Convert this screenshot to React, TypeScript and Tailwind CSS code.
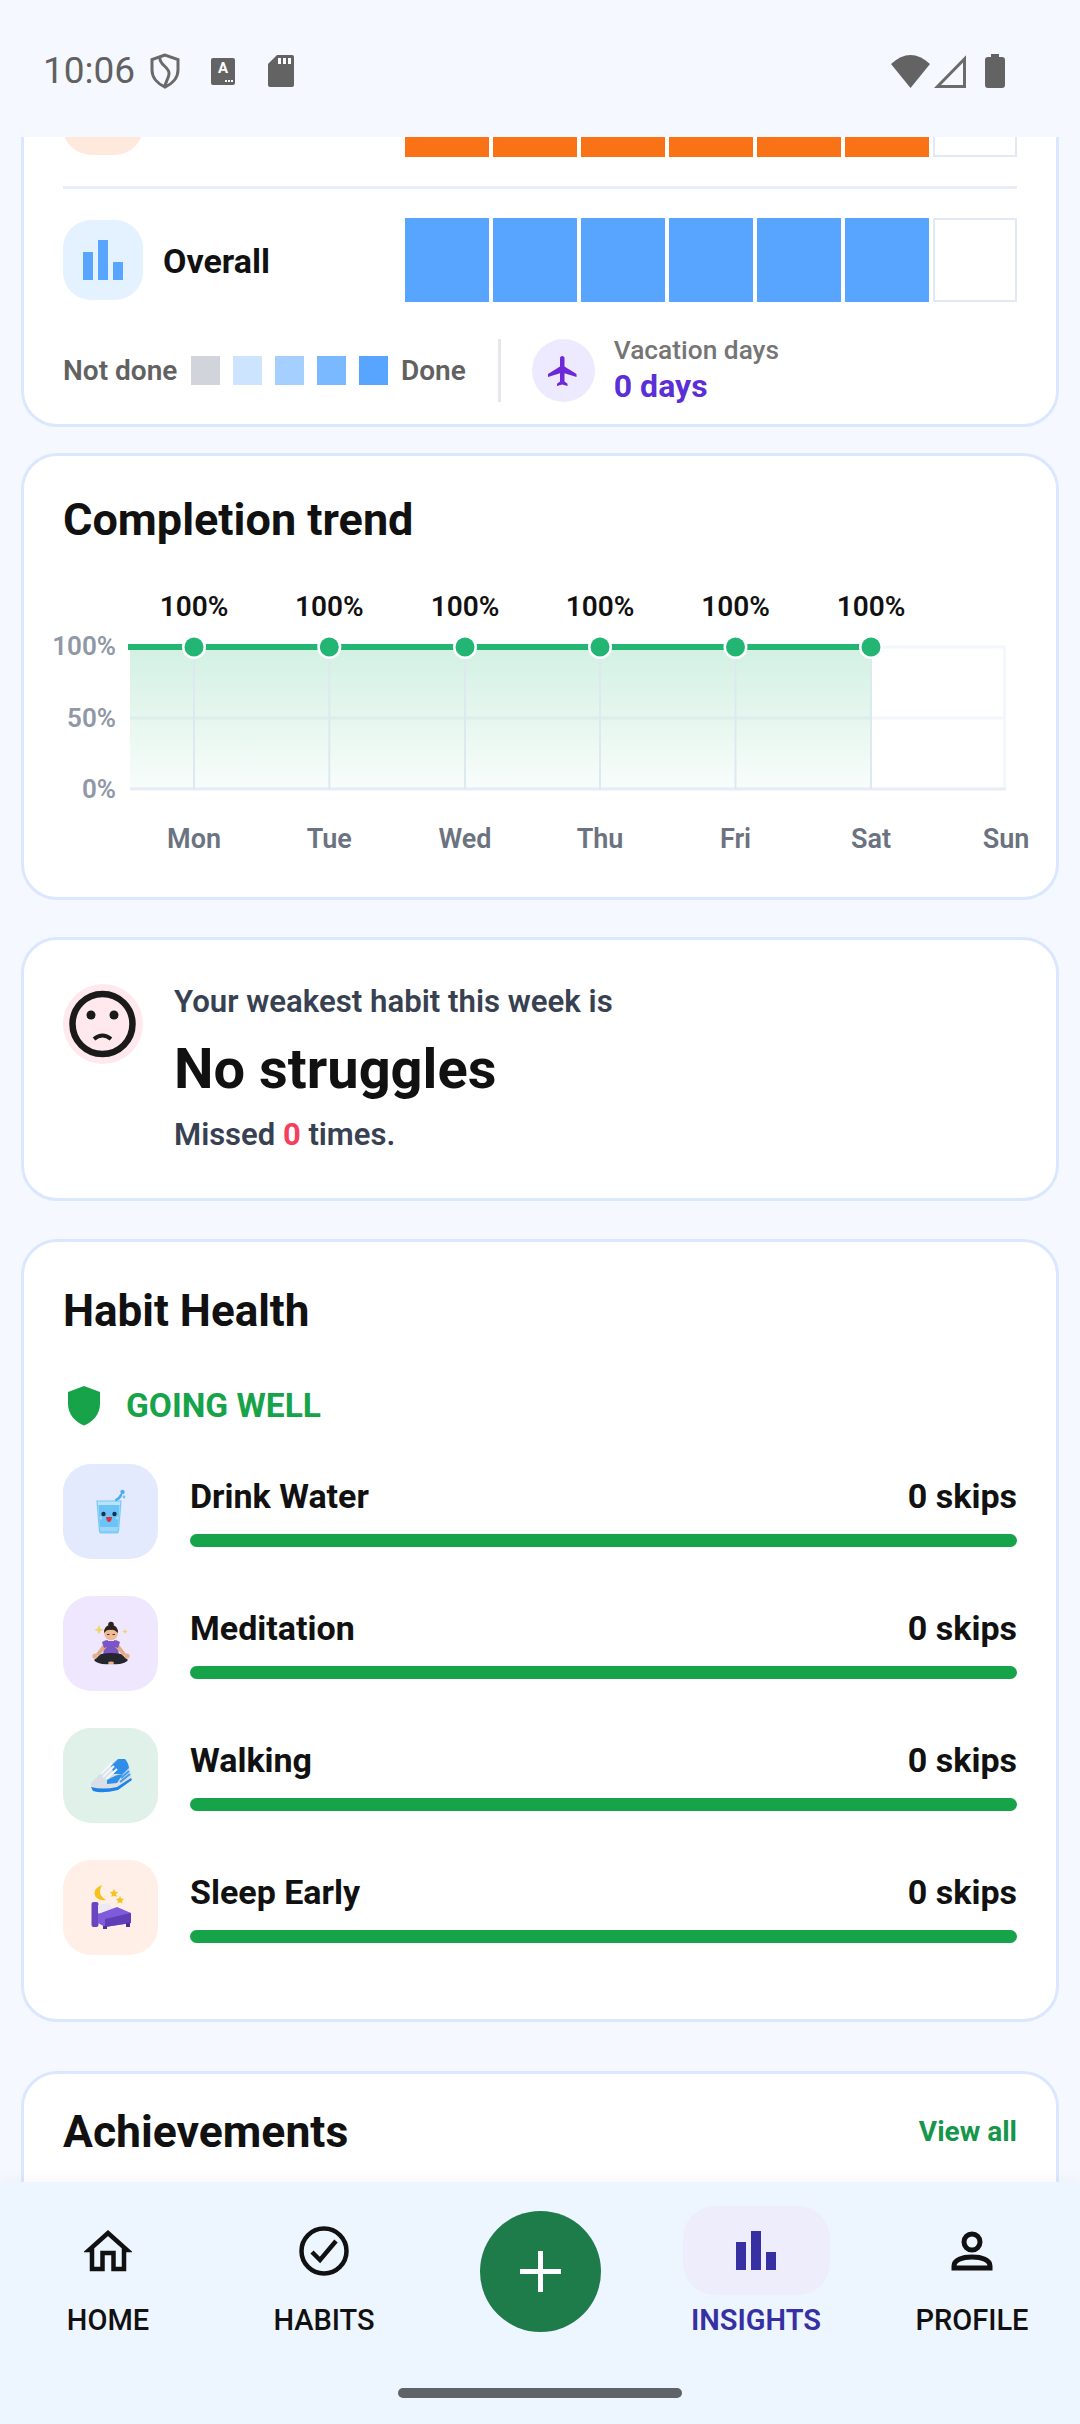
import React from "react";

const font = { fontFamily: "Roboto, sans-serif" };

function StatusBar() {
  return (
    <div className="h-[137px] shrink-0 flex items-start justify-between pl-[43px] pr-[75px] pt-[54px] text-[#5f6368]">
      <div className="flex items-center h-[34px]">
        <span className="text-[37px] leading-[34px] text-[#616161] w-[106px]">10:06</span>
        <svg width="32" height="36" viewBox="0 0 32 36" fill="none" stroke="#6a6a6a" strokeWidth="3">
          <path d="M16 2 L3 6.5 V17 C3 25 9 31 16 34 C23 31 29 25 29 17 V6.5 Z" />
          <path d="M11 5 C10 12 21 14 20 21 C19.7 25 17 28 16 33" />
        </svg>
        <div className="ml-[30px] w-[24px] h-[27px] bg-[#636363] rounded-[2px] relative flex justify-center">
          <span className="text-white text-[15px] leading-[21px] font-bold">A</span>
          <div className="absolute right-[2px] bottom-[3px] flex gap-[1px]">
            <i className="w-[2px] h-[2px] bg-white block" />
            <i className="w-[2px] h-[2px] bg-white block" />
            <i className="w-[2px] h-[2px] bg-white block" />
          </div>
        </div>
        <svg width="26" height="32" viewBox="0 0 26 32" className="ml-[33px]">
          <path d="M9 0 H24 Q26 0 26 2 V30 Q26 32 24 32 H2 Q0 32 0 30 V9 Z" fill="#636363" />
          <rect x="10" y="3" width="3" height="6" fill="#fff" />
          <rect x="15" y="3" width="3" height="6" fill="#fff" />
          <rect x="20" y="3" width="3" height="6" fill="#fff" />
        </svg>
      </div>
      <div className="flex items-center h-[34px] gap-[4px]">
        <svg width="39" height="33" viewBox="0 0 39 33">
          <path d="M0 9 Q19.5 -9 39 9 L19.5 33 Z" fill="#636363" />
        </svg>
        <svg width="32" height="33" viewBox="0 0 32 33">
          <path d="M30.5 4 V31.5 H3.5 Z" fill="none" stroke="#6b6b6b" strokeWidth="3" />
        </svg>
        <svg width="20" height="34" viewBox="0 0 20 34" className="ml-[15px]">
          <path d="M6 0 H14 V3 H17 Q20 3 20 6 V31 Q20 34 17 34 H3 Q0 34 0 31 V6 Q0 3 3 3 H6 Z" fill="#636363" />
        </svg>
      </div>
    </div>
  );
}

function Cells({ color, done }: { color: string; done: number }) {
  return (
    <div className="w-[612px] h-[84px] grid grid-cols-7 gap-[4.5px]">
      {[0, 1, 2, 3, 4, 5, 6].map((i) =>
        i < done ? (
          <div key={i} className="h-full" style={{ background: color }} />
        ) : (
          <div key={i} className="h-full border-2 border-[#e2e8f4] bg-white" />
        ),
      )}
    </div>
  );
}

function WeekCard() {
  return (
    <div className="mx-[21px] -mt-[107px] bg-white border-[3px] border-[#dbe7fe] rounded-[36px] px-[39px] pt-[40px] pb-[22px]">
      <div className="flex items-center justify-between h-[84px]">
        <div className="w-[80px] h-[80px] rounded-[28px] bg-[#ffe9dd]" />
        <Cells color="#f97316" done={6} />
      </div>
      <div className="h-[3px] bg-[#e8edf7] mt-[29px]" />
      <div className="flex items-center justify-between h-[84px] mt-[29px]">
        <div className="flex items-center gap-[20px]">
          <div className="w-[80px] h-[80px] rounded-[28px] bg-[#e4f1ff] flex items-center justify-center">
            <svg width="40" height="40" viewBox="0 0 40 40" fill="#57a5ff">
              <rect x="0" y="12" width="10" height="28" />
              <rect x="15" y="0" width="10" height="40" />
              <rect x="30" y="22" width="10" height="18" />
            </svg>
          </div>
          <span className="text-[34px] leading-[40px] font-bold text-[#111] pt-[2px]">Overall</span>
        </div>
        <Cells color="#57a5ff" done={6} />
      </div>
      <div className="flex items-center h-[63px] mt-[37px]">
        <span className="text-[28px] font-semibold text-[#616161] leading-[36px] w-[128px]">Not done</span>
        <div className="flex gap-[13px]">
          <div className="w-[29px] h-[29px] bg-[#d1d5db]" />
          <div className="w-[29px] h-[29px] bg-[#cde4ff]" />
          <div className="w-[29px] h-[29px] bg-[#a4cfff]" />
          <div className="w-[29px] h-[29px] bg-[#7ab8ff]" />
          <div className="w-[29px] h-[29px] bg-[#57a5ff]" />
        </div>
        <span className="ml-[13px] text-[28px] font-semibold text-[#616161] leading-[36px]">Done</span>
        <div className="ml-[32px] w-[3px] h-[63px] bg-[#e5e7eb]" />
        <div className="ml-[31px] w-[63px] h-[63px] rounded-full bg-[#ede9fe] flex items-center justify-center">
          <svg width="36" height="36" viewBox="0 0 24 24" fill="#6d28d9">
            <path d="M21 16v-2l-8-5V3.5c0-.83-.67-1.5-1.5-1.5S10 2.67 10 3.5V9l-8 5v2l8-2.5V19l-2 1.5V22l3.5-1 3.5 1v-1.5L13 19v-5.5l8 2.5z" />
          </svg>
        </div>
        <div className="ml-[19px] flex flex-col">
          <span className="text-[26.3px] leading-[30px] font-medium text-[#757575] -mt-[2px]">Vacation days</span>
          <span className="text-[32px] leading-[36px] font-bold text-[#5b2fd6] mt-[3px]">0 days</span>
        </div>
      </div>
    </div>
  );
}

const xs = [194, 329.3, 465, 600, 735.5, 871];
const grid = "#f3f6fb";

function TrendCard() {
  const days: [string, number][] = [
    ["Mon", 194],
    ["Tue", 329.3],
    ["Wed", 465],
    ["Thu", 600],
    ["Fri", 735.5],
    ["Sat", 871],
    ["Sun", 1006],
  ];
  return (
    <div className="mx-[21px] mt-[26px] bg-white border-[3px] border-[#dbe7fe] rounded-[36px] pt-[38px]">
      <h2 className="ml-[39px] text-[45px] leading-[52px] font-bold text-[#111]">Completion trend</h2>
      <svg width="1032" height="351" viewBox="24 546 1032 351" className="block" style={font}>
        <defs>
          <linearGradient id="fillG" x1="0" y1="0" x2="0" y2="1">
            <stop offset="0" stopColor="#22b573" stopOpacity="0.2" />
            <stop offset="1" stopColor="#22b573" stopOpacity="0.03" />
          </linearGradient>
        </defs>
        <path d="M1004.5 647 V789" stroke={grid} strokeWidth="3" fill="none" />
        <path d="M130 647 H1006 M130 718 H1006" stroke={grid} strokeWidth="3" fill="none" />
        <path d="M130 789 H1006" stroke="#e8edf7" strokeWidth="3" fill="none" />
        <rect x="130" y="647" width="741" height="142" fill="url(#fillG)" />
        {xs.map((x) => (
          <path key={x} d={`M${x} 647 V789`} stroke="#dceaf0" strokeWidth="2" fill="none" />
        ))}
        <path d="M128 647 H871" stroke="#22b573" strokeWidth="6" fill="none" />
        {xs.map((x) => (
          <g key={x}>
            <circle cx={x} cy="647" r="12" fill="#fff" />
            <circle cx={x} cy="647" r="9.5" fill="#22b573" />
            <text x={x} y="616" textAnchor="middle" fontSize="28" fontWeight="600" fill="#111">100%</text>
          </g>
        ))}
        <text x="116" y="655" textAnchor="end" fontSize="26" fontWeight="600" fill="#9097a6">100%</text>
        <text x="116" y="727" textAnchor="end" fontSize="26" fontWeight="600" fill="#9097a6">50%</text>
        <text x="116" y="798" textAnchor="end" fontSize="26" fontWeight="600" fill="#9097a6">0%</text>
        {days.map(([d, x]) => (
          <text key={d} x={x} y="848" textAnchor="middle" fontSize="27" fontWeight="600" fill="#6b7280">{d}</text>
        ))}
      </svg>
    </div>
  );
}

function WeakestCard() {
  return (
    <div className="mx-[21px] mt-[37px] h-[264px] bg-white border-[3px] border-[#dbe7fe] rounded-[36px] pl-[39px] pt-[44px] flex gap-[31px]">
      <div className="w-[80px] h-[80px] rounded-full bg-[#ffe9ee] shrink-0">
        <svg width="80" height="80" viewBox="0 0 80 80" fill="none">
          <circle cx="39.5" cy="40" r="30" stroke="#1a1a1a" strokeWidth="6.5" />
          <circle cx="28" cy="31" r="4.5" fill="#1a1a1a" />
          <circle cx="51" cy="31" r="4.5" fill="#1a1a1a" />
          <path d="M31 55 Q39.5 48 48 55" stroke="#1a1a1a" strokeWidth="4" />
        </svg>
      </div>
      <div className="flex flex-col">
        <span className="text-[31.2px] leading-[36px] font-semibold text-[#374151]">Your weakest habit this week is</span>
        <span className="text-[56px] leading-[64px] font-bold text-[#111] mt-[17px]">No struggles</span>
        <span className="text-[31px] leading-[36px] font-semibold text-[#374151] mt-[16px]">
          Missed <b className="font-bold text-[#f43f5e]">0</b> times.
        </span>
      </div>
    </div>
  );
}

function WaterIcon() {
  return (
    <svg width="48" height="48" viewBox="0 0 48 48">
      <path d="M10 13 H34 L31.5 43 Q31.4 45 29 45 H15 Q12.6 45 12.5 43 Z" fill="#b9e3fb" stroke="#79c8f5" strokeWidth="1.2" />
      <path d="M11.5 17 H32.5 L31 43 Q31 44.5 29 44.5 H15 Q13 44.5 13 43 Z" fill="#6cc3f6" />
      <path d="M13 39 H31 L30.8 43.5 H13.3 Z" fill="#9ad6f9" />
      <path d="M29 12 Q33 10 34 7" stroke="#4aaef0" strokeWidth="2.4" fill="none" strokeLinecap="round" />
      <circle cx="35.5" cy="4" r="2.2" fill="#4aaef0" />
      <circle cx="37" cy="9" r="1.4" fill="#6cc3f6" />
      <circle cx="16.5" cy="26" r="2.2" fill="#16324f" />
      <circle cx="27.5" cy="26" r="2.2" fill="#16324f" />
      <path d="M19 29 H25 Q24.5 34 22 34 Q19.5 34 19 29 Z" fill="#d9304a" />
      <circle cx="13.8" cy="30" r="1.5" fill="#9ad6f9" />
      <circle cx="30.2" cy="30" r="1.5" fill="#9ad6f9" />
    </svg>
  );
}

function MeditateIcon() {
  return (
    <svg width="48" height="48" viewBox="0 0 48 48">
      <path d="M12 5 l1.4 3.4 3.4 1.4 -3.4 1.4 -1.4 3.4 -1.4 -3.4 -3.4 -1.4 3.4 -1.4 Z" fill="#f2d36b" />
      <path d="M38 9 l.8 1.8 1.8 .8 -1.8 .8 -.8 1.8 -.8 -1.8 -1.8 -.8 1.8 -.8 Z" fill="#f2d36b" />
      <path d="M18 21 H30 L32 35 H16 Z" fill="#7a55c7" />
      <path d="M18 22 L9 34 L11.5 36 L20 27 Z M30 22 L39 34 L36.5 36 L28 27 Z" fill="#e2a983" />
      <path d="M15 22 Q18 20 21 20 L20 27 L17 28 Z M33 22 Q30 20 27 20 L28 27 L31 28 Z" fill="#7a55c7" />
      <circle cx="24" cy="13.5" r="6.8" fill="#eeb995" />
      <path d="M17 13 Q17 5 24 5 Q31 5 31 13 Q27 9 24 10 Q20 9 17 13 Z" fill="#2b2320" />
      <circle cx="24" cy="4.5" r="2.8" fill="#2b2320" />
      <path d="M20 14.5 h2.5 M25.5 14.5 h2.5" stroke="#2b2320" strokeWidth="0.9" />
      <path d="M14 34 Q24 32 34 34 L41 40 Q38 45 24 44 Q10 45 7 40 Z" fill="#26262e" />
      <circle cx="8" cy="36" r="2.6" fill="#e7b08c" />
      <circle cx="40" cy="36" r="2.6" fill="#e7b08c" />
      <ellipse cx="24" cy="43" rx="3" ry="1.4" fill="#e7b08c" />
    </svg>
  );
}

function ShoeIcon() {
  return (
    <svg width="48" height="48" viewBox="0 0 48 48">
      <path d="M4 31 L19 16 L28 9 L36 7 Q41 8 43 17 Q45 23 44 27 L30 37 Q14 41 6 38 Q3 35 4 31 Z" fill="#d9dfe6" />
      <path d="M24 14 L31 7 L38 7 Q41 10 42 16 L36 22 L27 22 Z" fill="#2f8fe8" />
      <path d="M20 28 Q30 22 36 22 L30 31 L20 32 Z" fill="#2f8fe8" />
      <path d="M14 22 L25 11 M16 25 L27 14 M19 27 L30 17" stroke="#f4f7fa" strokeWidth="2.2" />
      <path d="M4 35 Q16 38 30 35 L44 26 L45 28 L31 38 Q15 42 6 39 Z" fill="#1e82e6" />
      <path d="M33 30 L43 22 M34 26 L42 19" stroke="#3d9bf0" strokeWidth="2" />
    </svg>
  );
}

function BedIcon() {
  return (
    <svg width="48" height="48" viewBox="0 0 48 48">
      <path d="M15 1 Q7 4 7.5 10 Q9 17 19 16 Q14 13 13 9 Q12.5 5 15 1 Z" fill="#f6c21c" />
      <path d="M27 5 l1.3 2.7 3 .4 -2.2 2 .5 3 -2.6 -1.4 -2.6 1.4 .5 -3 -2.2 -2 3 -.4 Z" fill="#f6c21c" />
      <path d="M33 12 l1.2 2.5 2.8 .4 -2 2 .5 2.7 -2.5 -1.3 -2.5 1.3 .5 -2.7 -2 -2 2.8 -.4 Z" fill="#f6c21c" />
      <rect x="4.5" y="18" width="7" height="25" rx="2" fill="#6a45c2" />
      <path d="M11 21 L22 19 L26 25 L11 29 Z" fill="#ece9f5" />
      <path d="M11 30 L30 23 L44 29 V39 L18 43 L11 39 Z" fill="#7f5adb" />
      <path d="M18 35 L44 29 V39 L18 43 Z" fill="#5f3fb8" />
      <rect x="16" y="42" width="4" height="3" fill="#4b3196" />
      <rect x="39" y="39" width="4" height="4" fill="#4b3196" />
    </svg>
  );
}

function HabitRow({ name, bg, icon }: { name: string; bg: string; icon: React.ReactNode }) {
  return (
    <div className="flex gap-[32px] h-[95px]">
      <div className={`w-[95px] h-[95px] rounded-[28px] shrink-0 flex items-center justify-center ${bg}`}>{icon}</div>
      <div className="flex-1 pt-[12px]">
        <div className="flex justify-between text-[34px] leading-[40px] font-bold text-[#111]">
          <span>{name}</span>
          <span>0 skips</span>
        </div>
        <div className="h-[13px] rounded-full bg-[#16a34a] mt-[18px]" />
      </div>
    </div>
  );
}

function HealthCard() {
  return (
    <div className="mx-[21px] mt-[38px] bg-white border-[3px] border-[#dbe7fe] rounded-[36px] px-[39px] pt-[44px] pb-[64px]">
      <h2 className="text-[44px] leading-[50px] font-bold text-[#111]">Habit Health</h2>
      <div className="flex items-center h-[40px] mt-[50px]">
        <svg width="34" height="40" viewBox="0 0 34 40" className="ml-[4px]" fill="#16a34a">
          <path d="M17 0 L33 6 V18 C33 28 26 36 17 39.5 C8 36 1 28 1 18 V6 Z" />
        </svg>
        <span className="ml-[25px] text-[33.5px] leading-[40px] font-bold text-[#16a34a]">GOING WELL</span>
      </div>
      <div className="flex flex-col gap-[37px] mt-[38px]">
        <HabitRow name="Drink Water" bg="bg-[#e3eafd]" icon={<WaterIcon />} />
        <HabitRow name="Meditation" bg="bg-[#efe7fd]" icon={<MeditateIcon />} />
        <HabitRow name="Walking" bg="bg-[#e0f1ea]" icon={<ShoeIcon />} />
        <HabitRow name="Sleep Early" bg="bg-[#ffefe6]" icon={<BedIcon />} />
      </div>
    </div>
  );
}

function AchievementsCard() {
  return (
    <div className="mx-[21px] mt-[49px] h-[300px] bg-white border-[3px] border-[#dbe7fe] rounded-[36px] px-[39px] pt-[33px]">
      <div className="flex items-center justify-between h-[50px]">
        <h2 className="text-[44.5px] leading-[50px] font-bold text-[#111]">Achievements</h2>
        <span className="text-[28px] leading-[36px] font-bold text-[#15964b]">View all</span>
      </div>
    </div>
  );
}

function NavItem({ label, active, icon }: { label: string; active?: boolean; icon: React.ReactNode }) {
  return (
    <div className="flex flex-col items-center">
      <div className={`w-[147px] h-[89px] rounded-[32px] flex items-center justify-center ${active ? "bg-[#eeedfc]" : ""}`}>{icon}</div>
      <span className={`mt-[7px] text-[29px] leading-[36px] font-medium ${active ? "text-[#3730a3] font-semibold" : "text-[#111]"}`}>{label}</span>
    </div>
  );
}

function BottomNav() {
  return (
    <div className="h-[242px] shrink-0 bg-[#edf5ff] shadow-[0_-6px_10px_rgba(0,0,0,0.025)] relative pt-[24px]">
      <div className="grid grid-cols-5">
        <NavItem
          label="HOME"
          icon={
            <svg width="48" height="42" viewBox="0 0 48 42" fill="none" stroke="#111" strokeWidth="4.5" strokeMiterlimit="6">
              <path d="M8 20 H5 L24 3 L43 20 H40 V39 H29.5 V23 H18.5 V39 H8 Z" />
            </svg>
          }
        />
        <NavItem
          label="HABITS"
          icon={
            <svg width="50" height="50" viewBox="0 0 50 50" fill="none" stroke="#111" strokeWidth="4.5">
              <circle cx="25" cy="25" r="22.5" />
              <path d="M13 26 L21 34 L37 15" />
            </svg>
          }
        />
        <div className="flex justify-center pt-[5px]">
          <div className="w-[121px] h-[121px] rounded-full bg-[#1e7b4a] flex items-center justify-center">
            <svg width="41" height="41" viewBox="0 0 41 41" fill="#fff">
              <rect x="18" y="0" width="5" height="41" />
              <rect x="0" y="18" width="41" height="5" />
            </svg>
          </div>
        </div>
        <NavItem
          label="INSIGHTS"
          active
          icon={
            <svg width="40" height="39" viewBox="0 0 40 39" fill="#3730a3">
              <rect x="0" y="11" width="10" height="28" />
              <rect x="15" y="0" width="10" height="39" />
              <rect x="30" y="21" width="10" height="18" />
            </svg>
          }
        />
        <NavItem
          label="PROFILE"
          icon={
            <svg width="42" height="40" viewBox="0 0 42 40" fill="none" stroke="#111" strokeWidth="5">
              <circle cx="21" cy="11" r="8" />
              <path d="M3 37 V35 C3 29 11 26 21 26 C31 26 39 29 39 35 V37 Z" />
            </svg>
          }
        />
      </div>
      <div className="w-[284px] h-[10px] rounded-full bg-[#5f6368] mx-auto mt-[50px]" />
    </div>
  );
}

export default function App() {
  return (
    <div className="w-[1080px] h-[2424px] flex flex-col bg-[#f5f9ff] overflow-hidden" style={font}>
      <StatusBar />
      <main className="flex-1 min-h-0 overflow-hidden">
        <WeekCard />
        <TrendCard />
        <WeakestCard />
        <HealthCard />
        <AchievementsCard />
      </main>
      <BottomNav />
    </div>
  );
}
